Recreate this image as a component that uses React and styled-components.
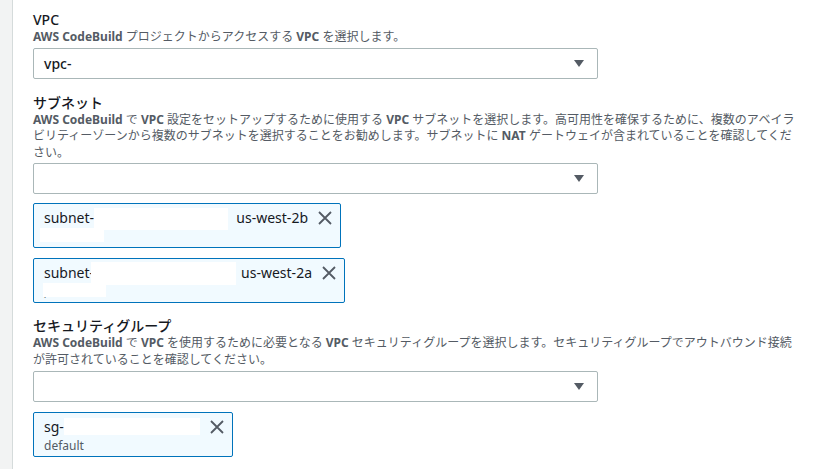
import React from 'react';
import styled, { createGlobalStyle } from 'styled-components';

const GlobalStyle = createGlobalStyle`
    html, body {
        margin: 0;
        padding: 0;
        background: #f2f3f3;
    }
    body {
        font-family: "Noto Sans", "Noto Sans CJK JP", sans-serif;
        color: #16191f;
    }
`;

const Page = styled.div`
    display: flex;
    width: 829px;
    height: 469px;
    overflow: hidden;
`;

const SideStrip = styled.div`
    width: ${props => props.width}px;
    flex-shrink: 0;
    background: #f2f3f3;
`;

const Panel = styled.div`
    flex: 1;
    background: #ffffff;
    border-left: 1px solid #d5dbdb;
    border-right: 1px solid #d5dbdb;
    padding: 11px 20px 0 20px;
    display: flex;
    flex-direction: column;
`;

const Field = styled.div`
    display: flex;
    flex-direction: column;
    margin-bottom: ${props => props.spacing || 15}px;
`;

const Label = styled.span`
    font-size: 14px;
    line-height: 18px;
    font-weight: 500;
    color: #16191f;
`;

const Description = styled.span`
    font-size: 12px;
    line-height: 16.5px;
    color: #545b64;
    width: 780px;

    b {
        font-weight: 700;
    }
`;

const Select = styled.div`
    box-sizing: border-box;
    width: 565px;
    height: 31px;
    border: 1px solid #aab7b8;
    border-radius: 2px;
    display: flex;
    align-items: center;
    justify-content: space-between;
    padding: 0 13px 0 10px;
    font-size: 14px;
    font-weight: 500;
    color: #16191f;
    margin-top: ${props => props.offset || 1}px;
`;

const Arrow = styled.span`
    width: 0;
    height: 0;
    border-left: 5px solid transparent;
    border-right: 5px solid transparent;
    border-top: 7px solid #545b64;
`;

const Tokens = styled.div`
    display: flex;
    flex-direction: column;
    gap: 10px;
    margin-top: ${props => props.offset || 10}px;
`;

const Token = styled.div`
    position: relative;
    box-sizing: border-box;
    width: ${props => props.width}px;
    height: 45px;
    border: 1px solid #0073bb;
    border-radius: 2px;
    background: #f1faff;
    padding: 4px 8px 0 10px;
`;

const TokenRow = styled.div`
    display: flex;
    align-items: center;
    font-size: 14px;
    line-height: 20px;
    color: #16191f;
`;

const TokenName = styled.span`
    flex: 1;
`;

const TokenTag = styled.span`
    font-size: 14px;
    margin-right: 10px;
`;

const TokenSub = styled.div`
    font-size: 12px;
    line-height: 17px;
    color: #545b64;
`;

const Redact = styled.span`
    position: absolute;
    background: #ffffff;
    left: ${props => props.x}px;
    top: ${props => props.y}px;
    width: ${props => props.w}px;
    height: ${props => props.h}px;
`;

const CloseIcon = () => (
    <svg width="14" height="14" viewBox="0 0 14 14">
        <path d="M1 1 L13 13 M13 1 L1 13" stroke="#545b64" strokeWidth="1.8" fill="none" />
    </svg>
);

export default function App() {
    return (
        <Page>
            <GlobalStyle />
            <SideStrip width={12} />
            <Panel>
                <Field>
                    <Label>VPC</Label>
                    <Description><b>AWS CodeBuild</b> プロジェクトからアクセスする <b>VPC</b> を選択します。</Description>
                    <Select offset={2}>vpc-<Arrow /></Select>
                </Field>
                <Field spacing={14}>
                    <Label>サブネット</Label>
                    <Description>
                        <b>AWS CodeBuild</b> で <b>VPC</b> 設定をセットアップするために使用する <b>VPC</b> サブネットを選択します。高可用性を確保するために、複数のアベイラ<br />
                        ビリティーゾーンから複数のサブネットを選択することをお勧めします。サブネットに <b>NAT</b> ゲートウェイが含まれていることを確認してくだ<br />
                        さい。
                    </Description>
                    <Select offset={2}><span /><Arrow /></Select>
                    <Tokens offset={9}>
                        <Token width={308}>
                            <TokenRow>
                                <TokenName>subnet-</TokenName>
                                <TokenTag>us-west-2b</TokenTag>
                                <CloseIcon />
                            </TokenRow>
                            <TokenSub>.</TokenSub>
                            <Redact x={60} y={4} w={134} h={22} />
                            <Redact x={6} y={24} w={64} h={14} />
                        </Token>
                        <Token width={312}>
                            <TokenRow>
                                <TokenName>subnet-</TokenName>
                                <TokenTag>us-west-2a</TokenTag>
                                <CloseIcon />
                            </TokenRow>
                            <TokenSub>,</TokenSub>
                            <Redact x={57} y={3} w={145} h={23} />
                            <Redact x={9} y={24} w={63} h={14} />
                        </Token>
                    </Tokens>
                </Field>
                <Field>
                    <Label>セキュリティグループ</Label>
                    <Description>
                        <b>AWS CodeBuild</b> で <b>VPC</b> を使用するために必要となる <b>VPC</b> セキュリティグループを選択します。セキュリティグループでアウトバウンド接続<br />
                        が許可されていることを確認してください。
                    </Description>
                    <Select offset={3}><span /><Arrow /></Select>
                    <Tokens offset={10}>
                        <Token width={200}>
                            <TokenRow>
                                <TokenName>sg-</TokenName>
                                <CloseIcon />
                            </TokenRow>
                            <TokenSub>default</TokenSub>
                            <Redact x={30} y={5} w={136} h={17} />
                        </Token>
                    </Tokens>
                </Field>
            </Panel>
            <SideStrip width={15} />
        </Page>
    );
}
